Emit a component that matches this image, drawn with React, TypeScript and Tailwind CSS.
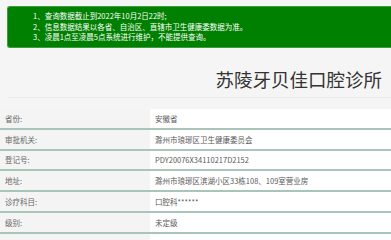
import React from "react";

const rows: [string, string][] = [
  ["省份:", "安徽省"],
  ["审批机关:", "滁州市琅琊区卫生健康委员会"],
  ["登记号:", "PDY20076X34110217D2152"],
  ["地址:", "滁州市琅琊区滨湖小区33栋108、109室营业房"],
  ["诊疗科目:", "口腔科******"],
  ["级别:", "未定级"],
  ["", ""],
];

export default function App() {
  return (
    <div
      className="w-[391px] h-[240px] overflow-hidden bg-[#f5f5f5]"
      style={{ fontFamily: '"Noto Sans CJK SC", "Noto Sans", sans-serif' }}
    >
      <div className="pt-[6px] pl-[7px]">
        <div className="h-[42px] bg-[#008000] border border-[#3d9e3d] border-r-0 rounded-l-[3px] pl-[25px] pt-[4px] text-white text-[7.5px] leading-[10.5px]">
          <div>1、查询数据截止到2022年10月2日22时;</div>
          <div>2、信息数据结果以各省、自治区、直辖市卫生健康委数据为准。</div>
          <div>3、凌晨1点至凌晨5点系统进行维护，不能提供查询。</div>
        </div>
      </div>
      <div className="ml-[8px] mt-[18px] h-[32px] border-b border-[#ebebeb] text-right pr-[9px] text-[18.5px] leading-[26px] text-[#333]">
        苏陵牙贝佳口腔诊所
      </div>
      <div className="mt-[11px]">
        {rows.map(([k, v], i) => (
          <div
            key={i}
            className="flex h-[20.8px] border-b-2 border-[#a9c5b9] text-[7.5px]"
          >
            <div className="w-[150px] bg-[#f4f4f4] pl-[5px] flex items-center text-[#666]">{k}</div>
            <div className="flex-1 bg-white pl-[5px] flex items-center text-[#5a5a5a]">{v}</div>
          </div>
        ))}
      </div>
    </div>
  );
}
